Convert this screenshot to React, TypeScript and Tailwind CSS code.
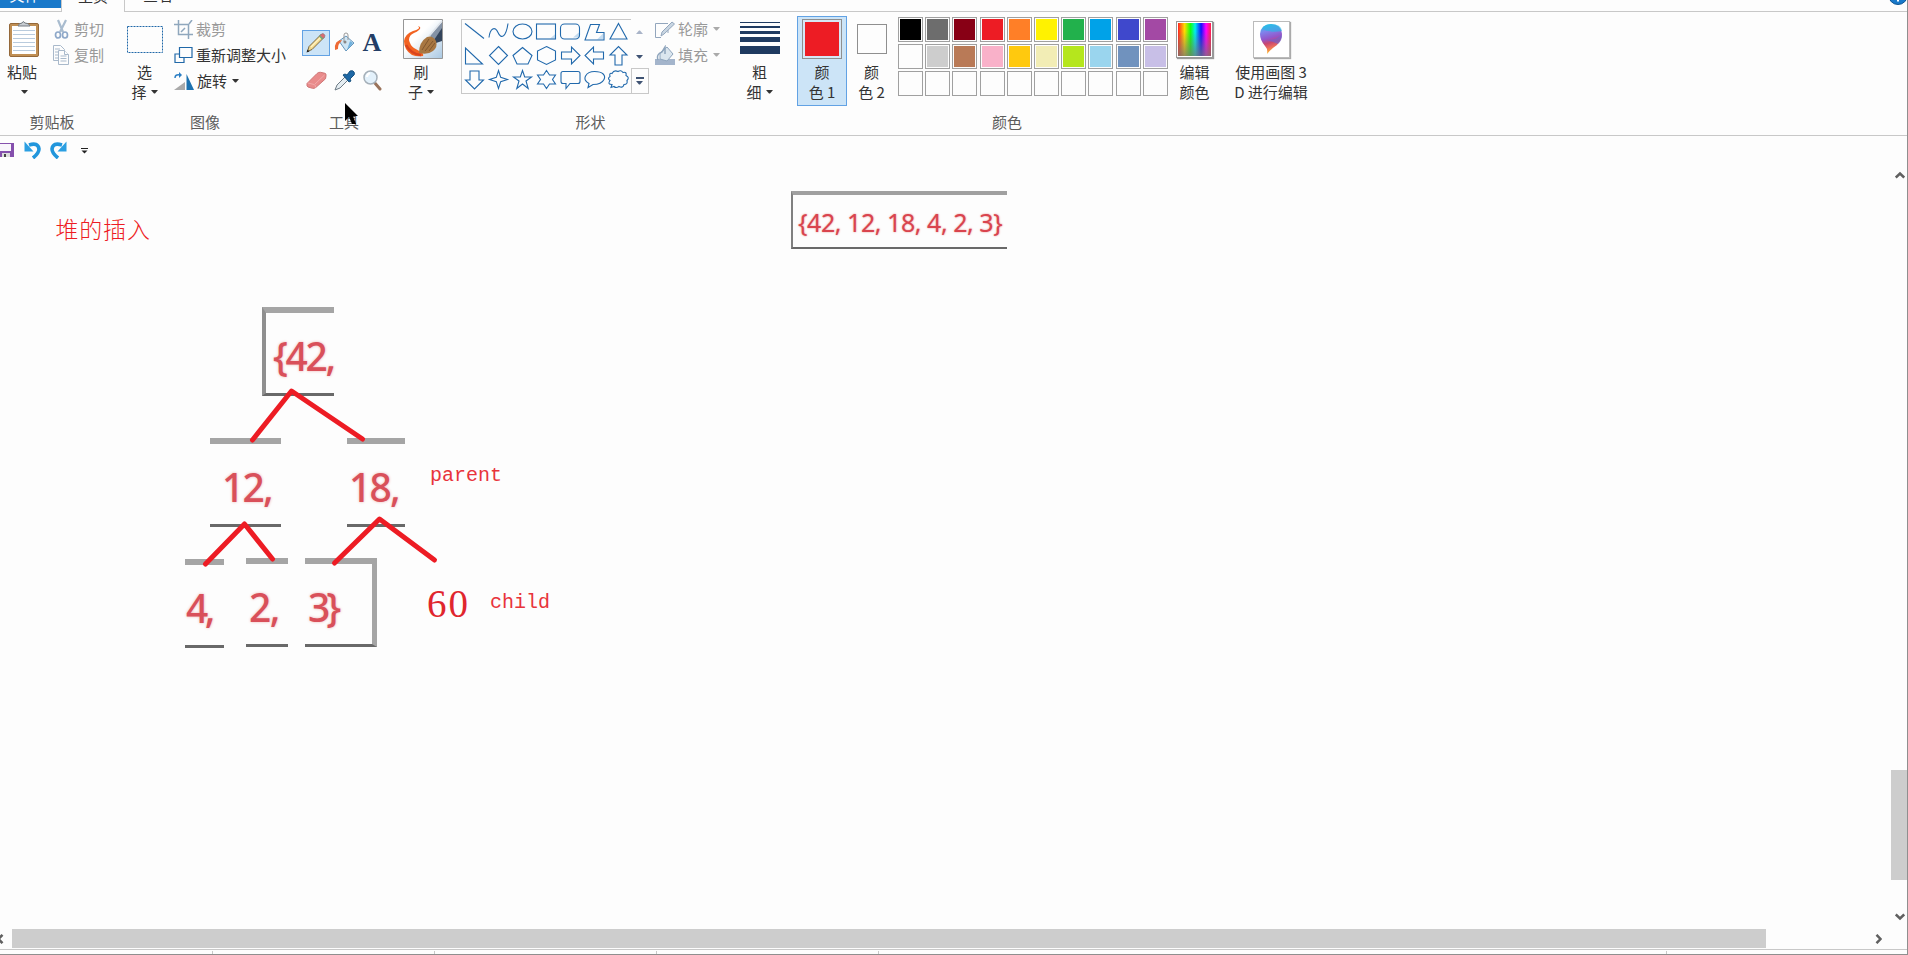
import { type ReactNode } from 'react'

const topColors = ['#000000', '#6d6d6d', '#880015', '#ed1c24', '#ff7f27', '#fff200', '#22b14c', '#00a2e8', '#3f48cc', '#a349a4']
const midColors = ['#fdfdfd', '#cdcdcd', '#b97a57', '#f9b1c9', '#ffc90e', '#f2edb5', '#b5e61d', '#9ad5ee', '#7092be', '#c8bfe7']
const emptyColors = Array(10).fill('#fdfdfd')

const shapes: ReactNode[] = [
  <path d="M3 4 22 19" />,
  <path d="M3 18C4 9 9 6 12 13S20 18 22 4" />,
  <ellipse cx="12.5" cy="12" rx="9.5" ry="7.5" />,
  <><path d="M22 14v5h-6z" fill="#c5dcf0" stroke="none" /><rect x="2.5" y="4.5" width="19" height="15" /></>,
  <><path d="M22 12v6h-7z" fill="#c5dcf0" stroke="none" /><rect x="2.5" y="4.5" width="19" height="15" rx="4" /></>,
  <><path d="M21 14v6h-6z" fill="#c5dcf0" stroke="none" /><path d="M8.500 5h9l-3 8h7.500v7.500h-19z" /></>,
  <path d="M12.500 4 21 19.500H4z" />,
  <path d="M3.500 4.500v16h17z" />,
  <path d="m12.500 3 9 9-9 9-9-9z" />,
  <path d="m12.500 4 9.500 8-4 8.500H7L3 12z" />,
  <path d="m12.500 3 9 4.500v9l-9 4.500-9-4.500v-9z" />,
  <path d="M3.500 8.500h10v-5l8.500 8.500-8.500 8.500v-5h-10z" />,
  <path d="M21.500 8.500h-10v-5L3 12l8.500 8.500v-5h10z" />,
  <path d="M9 21.500v-10H4l8.500-8.500 8.500 8.500h-5v10z" />,
  <path d="M8 3.500v9H3.500l9 9 9-9H17v-9z" />,
  <path d="m12.500 3 2.200 6.800 6.800 2.200-6.800 2.200-2.200 6.800-2.200-6.800L3.500 12l6.800-2.200z" />,
  <path d="m12.500 3 2.200 6.500h6.800l-5.500 4 2.200 7.500-5.700-4.500L6.800 21 9 13.500l-5.500-4h6.800z" />,
  <path d="m12.500 3 3 4.500h6L18.500 12l3 4.500h-6l-3 4.500-3-4.500h-6l3-4.500-3-4.500h6z" />,
  <path d="M5 4h15q2 0 2 2v8q0 2-2 2h-8l-4 5v-5H5q-2 0-2-2V6q0-2 2-2z" />,
  <path d="M7 16C-1 12 4 4 12.500 4S24 8 22 12s-6 5-11 5l-5 3z" />,
  <path d="M6 6q2-4 6-2 3-2 5 1 4-1 3 3 4 2 1 5 1 4-3 4-1 4-5 2-3 2-5 0l-3 1 1-3q-5 0-2-4-3-2 0-4-1-4 2-3z" />,
]

const Caret = ({ className = 'text-[#333]' }: { className?: string }) => (
  <svg width="7" height="4" className={`shrink-0 ${className}`}>
    <path d="M0 0h7L4 3.500H3z" fill="currentColor" />
  </svg>
)

const Group = ({ label, className = '', labelClass = '', children }: { label?: string; className?: string; labelClass?: string; children: ReactNode }) => (
  <div className={`flex shrink-0 flex-col ${className}`}>
    <div className="flex h-[98px]">{children}</div>
    <div className={`text-center leading-6 text-[#5c5c5c] ${labelClass}`}>{label}</div>
  </div>
)

// Large ribbon button: picture on top, two caption lines below
const BigButton = ({ icon, className = '', children }: { icon: ReactNode; className?: string; children: ReactNode }) => (
  <div className={`flex shrink-0 flex-col items-center leading-5 ${className}`}>
    <div className="flex h-[50px] shrink-0 items-center justify-center pt-1">{icon}</div>
    {children}
  </div>
)

const Row = ({ icon, text, caret, disabled }: { icon: ReactNode; text: string; caret?: boolean; disabled?: boolean }) => (
  <div className={`flex h-[26px] items-center gap-[3px] whitespace-nowrap ${disabled ? 'text-[#999]' : 'text-[#333]'}`}>
    {icon}
    <span>{text}</span>
    {caret && <Caret className={disabled ? 'ml-0.5 text-[#aaa]' : 'ml-0.5 text-[#333]'} />}
  </div>
)

const PasteIcon = () => (
  <svg width="32" height="38" viewBox="0 0 32 38" className="ml-[3px]">
    <rect x="1.5" y="3.5" width="29" height="33" rx="1.500" fill="#c08f54" stroke="#94683a" />
    <path d="M4 6h24v28H4z" fill="#fff" />
    <path d="M5 10.500h22M5 14.500h22M5 18.500h22M5 22.500h22M5 26.500h22M5 30.500h22" stroke="#b9cbdd" />
    <path d="M10 6q1-3 4-3 1-3 3 0 4 0 5 3z" fill="#c7ccd1" stroke="#747b82" />
  </svg>
)

const CutIcon = () => (
  <svg width="19" height="20" viewBox="0 0 19 20" fill="none">
    <path d="m6 1 5 12M14 1 8 13" stroke="#a9bccf" strokeWidth="2.200" />
    <ellipse cx="6" cy="16" rx="2.500" ry="3" stroke="#8ea8c9" strokeWidth="1.700" />
    <ellipse cx="13" cy="16" rx="2.500" ry="3" stroke="#8ea8c9" strokeWidth="1.700" />
  </svg>
)

const CopyIcon = () => (
  <svg width="19" height="20" viewBox="0 0 19 20" fill="#fdfdfd" stroke="#a9b9cb">
    <path d="M1.500.5h7l4 4v11h-11z" />
    <path d="M3 4h5M3 7h5M3 10h4M3 13h4" />
    <path d="M6.500 5.500h6l4 4v10h-10z" />
    <path d="M12.500 5.500v4h4M8.500 11h6M8.500 13.500h6M8.500 16h6" />
  </svg>
)

const CropIcon = () => (
  <svg width="19" height="19" viewBox="0 0 19 19" fill="none" stroke="#8fa7bd" strokeWidth="1.500">
    <path d="M4.500 0v14.500H19M0 4.500h14.500V19" />
    <path d="m7 12 4-4M15 4l3-4" />
  </svg>
)

const ResizeIcon = () => (
  <svg width="19" height="18" viewBox="0 0 19 18" fill="#fdfdfd" stroke="#2068a8" strokeWidth="1.200">
    <path d="M1 8h9v8.500H1z" />
    <path d="M5.500 1.500H18v10H5.500z" />
  </svg>
)

const RotateIcon = () => (
  <svg width="20" height="19" viewBox="0 0 20 19">
    <path d="M12.500 2v16H20z" fill="#1d72b0" />
    <path d="M11 10v8H0z" fill="#aaa" />
    <path d="M1 6q0-4 5-3" fill="none" stroke="#2b7ec4" strokeWidth="1.500" />
    <path d="m5 0 3 3-3 3z" fill="#2b7ec4" />
  </svg>
)

const PencilIcon = () => (
  <svg width="22" height="22" viewBox="0 0 22 22">
    <path d="m2.500 19.500 1.500-5L16 2.500l3 3-12 12z" fill="#f3d98c" stroke="#6d5a35" strokeWidth=".9" />
    <path d="m6 15 11-11" stroke="#fff3c4" strokeWidth="1.300" />
    <path d="m15 3.500 1.500-1.500q1.500-1 2.800.4T19.500 5L18 6.500z" fill="#dd6b6f" stroke="#8a7478" strokeWidth=".7" />
    <path d="m14 4.500 3 3 1-1-3-3z" fill="#6aa875" />
    <path d="m1.500 20.500 1-3 2 2z" fill="#222" />
  </svg>
)

const BucketIcon = () => (
  <svg width="21" height="20" viewBox="0 0 21 20">
    <path d="m5 9 7-5 8 7-8 8z" fill="#cfe5f4" stroke="#6496bd" />
    <path d="m13 18 6-7-3-2z" fill="#6fb0dd" />
    <path d="M10 10V3q0-2 2-2t2 2v5" fill="none" stroke="#999" />
    <circle cx="11" cy="10" r="1.500" fill="#888" />
    <path d="M1 18q-1-10 7-10l-2 3q-2 1-2 6z" fill="#ee6a35" />
  </svg>
)

const EraserIcon = () => (
  <svg width="21" height="19" viewBox="0 0 21 19">
    <path d="M1 12.500 11 2.500Q12.500 1 14.500 1.300l4.500 1q1.500.5 1 2.500l-.5 3-9.500 8.500q-1.500 1.500-3.500 1L2 16q-1.500-.5-1-3.500z" fill="#e98b8b" stroke="#cf7777" />
    <path d="m2 12 6 1.500q2 .5 1.500 3M9 13l9.500-9" fill="none" stroke="#f2a9a9" />
  </svg>
)

const PickerIcon = () => (
  <svg width="21" height="21" viewBox="0 0 21 21">
    <path d="m1 20 2-5 8-8 3 3-8 8z" fill="#e5edf2" stroke="#6d7b85" />
    <path d="m9 5 2-1 2 1 3-4q3-1 4 1t0 3l-4 4 1 2-2 1z" fill="#1e68a6" stroke="#17517f" />
  </svg>
)

const ZoomIcon = () => (
  <svg width="19" height="21" viewBox="0 0 19 21">
    <path d="m11 12 6 7" stroke="#9a735b" strokeWidth="3" strokeLinecap="round" />
    <circle cx="7.500" cy="7.500" r="6.500" fill="#e3f1fb" stroke="#a5b0b9" strokeWidth="1.500" />
    <path d="M4 7q0-3 3-4" stroke="#fff" strokeWidth="2" fill="none" />
  </svg>
)

const BrushIcon = () => (
  <svg width="40" height="40" viewBox="0 0 40 40">
    <defs>
      <linearGradient id="brushBg" x1="0" y1="0" x2="1" y2="1">
        <stop offset=".4" stopColor="#fff" />
        <stop offset="1" stopColor="#a9c8e2" />
      </linearGradient>
    </defs>
    <path d="M.5.5h39v39H.5z" fill="url(#brushBg)" stroke="#979797" />
    <path d="M39 4v18l-6 2-4-6z" fill="#33445b" />
    <path d="M39 3 27 17l4 4 8-12z" fill="#8492a5" />
    <path d="M39 2 26 17" stroke="#dfe4ea" strokeWidth="1.500" />
    <path d="M10 12q4-1 5-2 2-1 0-3 4 1 1 4-2 2-5 3-5 2-5 7 1 5 5 8l7 4q3 2 2 4-6 1-11-1Q1 31 1 22q1-7 9-10z" fill="#f26322" />
    <path d="M3 26q5 9 15 10" stroke="#d9441f" strokeWidth="2.500" fill="none" />
    <path d="M16 34q0-11 8-16 6-2 9 4 2 6-3 10-5 4-14 2z" fill="#a87742" />
    <path d="m19 31 7-11M22 32l8-10M26 32l6-8" stroke="#81572e" />
  </svg>
)

const OutlineIcon = () => (
  <svg width="20" height="17" viewBox="0 0 20 17" fill="none" stroke="#93a6bd">
    <path d="M13 2.500H.5v14H6M13 9v3" />
    <path d="m6 15 1-4 10-10 2.500 2L9 13z" fill="#c9d6e2" />
  </svg>
)

const FillIcon = () => (
  <svg width="20" height="20" viewBox="0 0 20 20">
    <path d="M0 14h20v6H0z" fill="#a4b5cc" />
    <path d="m5 8 7-6 6 7-6 7-7-2z" fill="#dbe6ef" stroke="#8fa5bd" />
    <path d="M3 15q-2-6 4-8l3-5v7" fill="none" stroke="#8fa5bd" strokeWidth="1.500" />
  </svg>
)

const SpectrumIcon = () => (
  <div className="h-[37px] w-[37px] border border-[#999] bg-white p-px shadow-[1px_1px_1px_#999]">
    <div className="h-full bg-[linear-gradient(90deg,#f22,#fd0_20%,#1f1_38%,#0ee_52%,#11f_70%,#f0f_85%,#f24)]">
      <div className="h-full bg-[linear-gradient(transparent_25%,rgba(115,115,115,.75))]" />
    </div>
  </div>
)

const Paint3DIcon = () => (
  <div className="flex h-[37px] w-[37px] items-center justify-center border border-[#bbb] bg-white shadow-[1px_1px_1px_#aaa]">
    <svg width="24" height="32" viewBox="0 0 24 32">
      <defs>
        <linearGradient id="p3d" x1=".2" y1="0" x2=".4" y2="1">
          <stop offset="0" stopColor="#27cbe9" />
          <stop offset=".25" stopColor="#7f83ec" />
          <stop offset=".5" stopColor="#9455c9" />
          <stop offset=".65" stopColor="#c84670" />
          <stop offset=".8" stopColor="#ec6d5c" />
          <stop offset="1" stopColor="#ffc21c" />
        </linearGradient>
      </defs>
      <path d="M8 31q1-5-2-8Q1 17 1 11 2 1 12 1t11 10q0 6-5 11-6 4-10 9z" fill="url(#p3d)" />
      <path d="M3 6q8 4 20 2-1-7-11-7Q6 1 3 6z" fill="#22bce5" opacity=".6" />
      <path d="m8 17 6 2 5 2q4-3 4-9l-7 4z" fill="#6366d9" opacity=".6" />
    </svg>
  </div>
)

const UndoIcon = ({ className = '' }: { className?: string }) => (
  <svg width="17" height="18" viewBox="0 0 17 18" className={className}>
    <path d="M5 4q9-3 10 4 0 4-6 9" fill="none" stroke="#2196dc" strokeWidth="3.600" />
    <path d="M.5.500v10h9z" fill="#2b9fe2" />
  </svg>
)

const Chevron = ({ className = '' }: { className?: string }) => (
  <svg width="10" height="8" viewBox="0 0 10 8" className={className} fill="none" stroke="#606060" strokeWidth="2.500">
    <path d="m.8 6.500 4.200-4 4.200 4" />
  </svg>
)

const PaletteRow = ({ colors }: { colors: string[] }) => (
  <div className="flex gap-[2.2px]">
    {colors.map((c, i) => (
      <div key={i} className="h-[25px] w-[25px] shrink-0 border border-[#a0a0a0] p-px">
        <div className="h-full" style={{ backgroundColor: c }} />
      </div>
    ))}
  </div>
)

// Pasted scraps of the array text, each keeps a part of the old frame
const scraps = [
  { text: '{42,', box: 'left-[262px] top-[171px] w-[72px] border-l-4 border-l-[#8f8f8f]', pad: 'left-[7px] tracking-[-2.4px]' },
  { text: '12,', box: 'left-[210px] top-[302px] w-[71px]', pad: 'left-[12px] tracking-[-1.8px]' },
  { text: '18,', box: 'left-[347px] top-[302px] w-[58px]', pad: 'left-[2px] tracking-[-1.8px]' },
  { text: '4,', box: 'left-[185px] top-[423px] w-[39px]', pad: 'left-[1px] tracking-[-3.5px]' },
  { text: '2,', box: 'left-[246px] top-[422px] w-[42px]', pad: 'left-[3px] tracking-[-1.5px]' },
  { text: '3}', box: 'left-[305px] top-[422px] w-[72px] border-r-[5px] border-r-[#a5a5a5]', pad: 'left-[3px] tracking-[-4px]' },
]

const Ribbon = () => (
  <div className="flex h-[124px] shrink-0 border-b border-[#c8c8c8] text-[15px] text-[#333]">
    <Group label="剪贴板" className="w-[104px]">
      <BigButton icon={<PasteIcon />} className="w-[46px] pr-0.5">
        <span>粘贴</span>
        <span className="flex h-[19px] items-center pl-1"><Caret /></span>
      </BigButton>
      <div className="ml-[6px] pt-1">
        <Row icon={<CutIcon />} text="剪切" disabled />
        <Row icon={<CopyIcon />} text="复制" disabled />
      </div>
    </Group>

    <Group label="图像" className="w-[198px]" labelClass="pl-1">
      <BigButton
        className="ml-[17px] w-[47px]"
        icon={
          <svg width="36" height="27">
            <rect x=".5" y=".5" width="35" height="26" fill="none" stroke="#2068a8" strokeDasharray="2 1" />
          </svg>
        }
      >
        <span>选</span>
        <span className="flex items-center gap-1">择<Caret /></span>
      </BigButton>
      <div className="ml-[6px] pt-1">
        <Row icon={<CropIcon />} text="裁剪" disabled />
        <Row icon={<ResizeIcon />} text="重新调整大小" />
        <Row icon={<RotateIcon />} text="旋转" caret />
      </div>
    </Group>

    <Group label="工具" className="w-[84px]">
      <div className="grid h-[90px] w-[84px] grid-cols-3 grid-rows-[40px_36px] place-items-center pt-[10px]">
        <div className="mt-px flex h-[26px] w-[28px] items-center justify-center border border-[#62a2e4] bg-[#cce4f7]"><PencilIcon /></div>
        <BucketIcon />
        <span className="pt-0.5 font-['Liberation_Serif',serif] text-[26px] leading-[26px] font-bold text-[#243e66]">A</span>
        <EraserIcon />
        <PickerIcon />
        <ZoomIcon />
      </div>
    </Group>

    <Group className="w-[75px]">
      <BigButton icon={<BrushIcon />} className="ml-[14px] w-[46px]">
        <span className="pr-1">刷</span>
        <span className="flex items-center gap-1 pr-1">子<Caret /></span>
      </BigButton>
    </Group>

    <Group label="形状" className="w-[259px]">
      <div className="mt-[7px] grid h-[75px] w-[170px] grid-cols-[repeat(7,24px)] grid-rows-[repeat(3,24px)] border border-r-0 border-[#c8c8c8]">
        {shapes.map((s, i) => (
          <svg key={i} width="24" height="24" viewBox="0 .5 24 24" fill="none" stroke="#2169ac" strokeWidth="1.100">{s}</svg>
        ))}
      </div>
      <div className="mt-[7px] flex w-[18px] flex-col items-center">
        <Caret className="mt-[11px] rotate-180 text-[#a9b4c8]" />
        <Caret className="mt-[21px] text-[#3f5373]" />
        <div className="mt-[9px] flex h-[26px] w-[18px] flex-col items-center justify-center gap-0.5 border border-[#c8c8c8]">
          <div className="h-0.5 w-2 bg-[#3f5373]" />
          <Caret className="text-[#3f5373]" />
        </div>
      </div>
      <div className="ml-[6px] pt-1">
        <Row icon={<OutlineIcon />} text="轮廓" caret disabled />
        <Row icon={<FillIcon />} text="填充" caret disabled />
      </div>
    </Group>

    <Group className="w-[77px]">
      <BigButton
        className="ml-[16px] w-[47px]"
        icon={
          <div className="-mt-[3px] flex w-10 flex-col gap-[3px]">
            <div className="h-px bg-[#1f3a60]" />
            <div className="h-0.5 bg-[#1f3a60]" />
            <div className="h-[3px] bg-[#1f3a60]" />
            <div className="h-[5px] bg-[#1f3a60]" />
            <div className="mt-px h-2 bg-[#1f3a60]" />
          </div>
        }
      >
        <span>粗</span>
        <span className="flex items-center gap-1">细<Caret /></span>
      </BigButton>
    </Group>

    <Group label="颜色" className="w-[420px]">
      <div className="mt-1 h-[90px] w-[50px] border border-[#62a2e4] bg-[#cce4f7]">
        <BigButton className="-mt-[5px]" icon={<div className="h-10 w-10 border border-[#8f8f8f] bg-[#d6e6f4] p-0.5"><div className="h-full bg-[#ed1c24]" /></div>}>
          <span>颜</span>
          <span>色 1</span>
        </BigButton>
      </div>
      <BigButton className="w-[49px]" icon={<div className="h-[30px] w-[30px] border border-[#8f8f8f]" />}>
        <span>颜</span>
        <span>色 2</span>
      </BigButton>
      <div className="ml-0.5 flex w-[271px] flex-col gap-0.5 pt-[5px]">
        <PaletteRow colors={topColors} />
        <PaletteRow colors={midColors} />
        <PaletteRow colors={emptyColors} />
      </div>
      <BigButton icon={<SpectrumIcon />} className="ml-[5px] w-[41px]">
        <span>编辑</span>
        <span>颜色</span>
      </BigButton>
    </Group>

    <BigButton icon={<Paint3DIcon />} className="ml-[13px] w-[82px]">
      <span>使用画图 3</span>
      <span>D 进行编辑</span>
    </BigButton>
  </div>
)

const App = () => {
  return (
    <div className="relative flex h-[955px] w-[1908px] flex-col overflow-hidden border-r border-b border-[#8f8f8f] bg-[#fdfdfd] font-['Noto_Sans_CJK_SC',sans-serif]">
      <div className="flex h-3 shrink-0 overflow-hidden text-[15px] text-[#333]">
        <div className="flex w-[61px] flex-col border-b border-[#c8c8c8]">
          <div className="flex h-2 items-end justify-center overflow-hidden bg-[#1979ca] pr-3 text-white">
            <span className="mb-0.5">文件</span>
          </div>
        </div>
        <div className="flex w-16 items-end justify-center border-x border-[#c8c8c8]"><span className="mb-[5px]">主页</span></div>
        <div className="flex flex-1 items-end border-b border-[#c8c8c8] pl-[18px]"><span className="mb-[5px]">查看</span></div>
      </div>
      <svg className="absolute top-0 right-0" width="20" height="6">
        <circle cx="11" cy="-5" r="9.500" fill="#1979ca" stroke="#0f5593" />
        <path d="M11 0v1.500" stroke="#fff" strokeWidth="2" />
      </svg>

      <Ribbon />

      {/* quick access bar and drawing surface */}
      <div className="flex min-h-0 flex-1">
        <div className="relative flex-1">
          <div className="flex h-[28px] items-center">
            <svg width="14" height="16" viewBox="0 0 14 16">
              <path d="M0 1h14v14H0z" fill="#8550ad" />
              <path d="M0 2h11v7H0z" fill="#f8f5fb" />
              <path d="M2 11h8v4H2z" fill="#ddd" />
              <path d="M4 12h2v3H4z" fill="#444" />
            </svg>
            <UndoIcon className="ml-[10px]" />
            <UndoIcon className="ml-[9px] -scale-x-100" />
            <svg width="7" height="6" className="mt-0.5 ml-[14px]">
              <path d="M0 .5h7" stroke="#222" />
              <path d="M.5 2.500h6l-3 3z" fill="#222" />
            </svg>
          </div>

          <p className="absolute top-[74px] left-[55.500px] text-[23px] leading-9 font-light tracking-[.8px] text-[#ed1c24]">堆的插入</p>

          <div className="absolute top-[55px] left-[791px] h-[58px] w-[216px] border-t-4 border-b-2 border-l-2 border-t-[#a0a0a0] border-b-[#696969] border-l-[#808080]">
            <p className="pl-[5px] font-['Noto_Sans',sans-serif] text-[25px] leading-[55px] tracking-[-.45px] whitespace-pre text-[#d9444e] [text-shadow:0_0_2px_#e68a8a]">{'{42, 12, 18, 4, 2, 3}'}</p>
          </div>

          {scraps.map((s) => (
            <div key={s.text} className={`absolute h-[89px] border-t-[6px] border-b-[3px] border-t-[#a5a5a5] border-b-[#696969] ${s.box}`}>
              <span className={`absolute top-[11px] font-['Noto_Sans',sans-serif] text-[39px] leading-[64px] font-medium text-[#d9505a] [text-shadow:0_0_3px_#eeb0b0] ${s.pad}`}>{s.text}</span>
            </div>
          ))}

          <svg className="absolute top-[236px] left-[190px]" width="260" height="210" viewBox="190 372 260 210" fill="none" stroke="#ed1c24" strokeWidth="5" strokeLinecap="round" strokeLinejoin="round">
            <path d="m252.500 440 39-49 71 48" />
            <path d="m205.500 564 39-40 28 35" />
            <path d="m334.500 563 45-44 55 41" />
          </svg>

          <span className="absolute top-[326px] left-[430px] font-['Liberation_Mono',monospace] text-[20px] leading-7 text-[#e8343b]">parent</span>
          <span className="absolute top-[446px] left-[427px] font-['Liberation_Serif',serif] text-[39px] leading-[44px] tracking-[2px] text-[#e0262d]">60</span>
          <span className="absolute top-[453px] left-[490px] font-['Liberation_Mono',monospace] text-[20px] leading-7 text-[#e8343b]">child</span>
        </div>

        <div className="flex w-4 flex-col items-center pt-[35px]">
          <Chevron className="ml-0.5" />
          <div className="mt-[591px] h-[110px] w-full bg-[#cdcdcd]" />
          <Chevron className="mt-[33px] ml-0.5 rotate-180" />
        </div>
      </div>

      <div className="flex h-[19px] shrink-0 items-center">
        <Chevron className="-ml-[5px] -rotate-90" />
        <div className="ml-[7px] h-full w-[1754px] bg-[#cdcdcd]" />
        <Chevron className="ml-[108px] rotate-90" />
      </div>
      <div className="mt-px flex h-[5px] shrink-0 border-t border-[#c8c8c8] pt-px">
        <div className="w-[213px] border-r border-[#c8c8c8]" />
        <div className="w-[222px] border-r border-[#c8c8c8]" />
        <div className="w-[222px] border-r border-[#c8c8c8]" />
        <div className="w-[222px] border-r border-[#c8c8c8]" />
        <div className="w-[788px] border-r border-[#c8c8c8]" />
      </div>

      <svg className="absolute top-[103px] left-[345px]" width="13" height="22">
        <path d="M0 0v18l4-4 3 7h4l-3-8h5z" fill="#000" />
      </svg>
    </div>
  )
}

export default App
